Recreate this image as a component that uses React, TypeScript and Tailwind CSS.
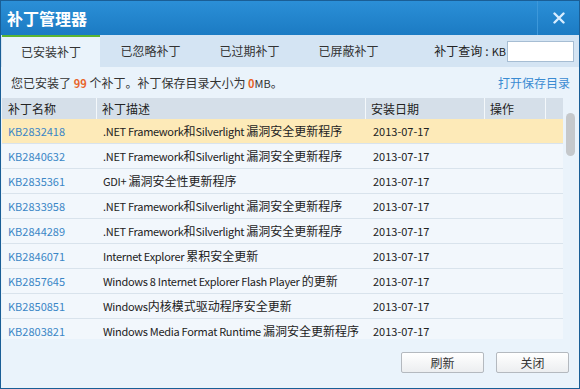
import React from "react";

const rows = [
  ["KB2832418", ".NET Framework和Silverlight 漏洞安全更新程序"],
  ["KB2840632", ".NET Framework和Silverlight 漏洞安全更新程序"],
  ["KB2835361", "GDI+ 漏洞安全性更新程序"],
  ["KB2833958", ".NET Framework和Silverlight 漏洞安全更新程序"],
  ["KB2844289", ".NET Framework和Silverlight 漏洞安全更新程序"],
  ["KB2846071", "Internet Explorer 累积安全更新"],
  ["KB2857645", "Windows 8 Internet Explorer Flash Player 的更新"],
  ["KB2850851", "Windows内核模式驱动程序安全更新"],
  ["KB2803821", "Windows Media Format Runtime 漏洞安全更新程序"],
];

const tabs = ["已安装补丁", "已忽略补丁", "已过期补丁", "已屏蔽补丁"];

const CJK = /[\u4e00-\u9fff\u3000-\u303f\uff00-\uffef]/;

function Mixed({ text }: { text: string }) {
  const parts = text.split(/([\u4e00-\u9fff\u3000-\u303f\uff00-\uffef]+)/).filter((p) => p.length > 0);
  return (
    <span className="whitespace-pre">
      {parts.map((p, i) =>
        CJK.test(p) ? (
          <span key={i} className="text-[12px]">
            {p}
          </span>
        ) : (
          <span key={i} className="text-[11px] tracking-[-0.3px]">
            {p}
          </span>
        )
      )}
    </span>
  );
}

export default function App() {
  return (
    <div
      className="w-[580px] h-[389px] border border-[#1a5e96] bg-[#eaf3fb] flex flex-col overflow-hidden text-[12px] text-[#222]"
      style={{ fontFamily: '"Noto Sans CJK SC", "Noto Sans", sans-serif' }}
    >
      {/* Title bar */}
      <div className="h-[34px] shrink-0 flex items-stretch bg-gradient-to-b from-[#2b8fd7] to-[#1b7bc3]">
        <div className="flex-1 flex items-center pl-[6px] text-white font-bold text-[16px] leading-none">
          补丁管理器
        </div>
        <div className="w-[42px] border-l border-[#3d98da] flex items-center justify-center">
          <svg width="12" height="12" viewBox="0 0 12 12">
            <path d="M1.5 1.5 L10.5 10.5 M10.5 1.5 L1.5 10.5" stroke="#d8edff" strokeWidth="2.4" strokeLinecap="round" />
          </svg>
        </div>
      </div>

      {/* Tabs */}
      <div className="h-[32px] shrink-0 flex items-stretch bg-[#d4e4f3]">
        {tabs.map((t, i) => (
          <div
            key={t}
            className={
              i === 0
                ? "w-[98px] ml-[1px] mr-[1px] flex items-center justify-center bg-[#eaf3fb] border-t-2 border-[#5cb531] text-[#333] leading-none"
                : "w-[99px] flex items-center justify-center text-[#333] leading-none"
            }
          >
            {t}
          </div>
        ))}
        <div className="flex-1 flex items-center justify-end pr-[5px]">
          <span className="text-[#222] leading-none mr-[1px] flex items-center">
            <span>补丁查询</span>
            <span className="mx-[3px]">:</span>
            <span className="text-[11px]">KB</span>
          </span>
          <div className="w-[67px] h-[21px] bg-white border border-[#a6bdd3]" />
        </div>
      </div>

      {/* Info row */}
      <div className="h-[31px] shrink-0 flex items-center justify-between pl-[10px] pr-[9px] leading-none">
        <span className="text-[#333]">
          您已安装了 <span className="text-[#e8642a] font-bold text-[11px]">99</span> 个补丁。补丁保存目录大小为 <span className="text-[#e8642a] font-bold text-[11px]">0</span><span className="text-[11px]">MB</span>。
        </span>
        <span className="text-[#3a8bd2]">打开保存目录</span>
      </div>

      {/* List */}
      <div className="h-[241px] shrink-0 flex">
        <div className="w-[561px] ml-[1px] flex flex-col overflow-hidden">
          <div className="h-[21px] shrink-0 flex bg-[#d5dfe9] leading-none text-[#222]">
            <div className="w-[95px] flex items-center pl-[6px] border-r border-[#f4f8fb]">补丁名称</div>
            <div className="w-[269px] flex items-center pl-[5px] border-r border-[#f4f8fb]">补丁描述</div>
            <div className="w-[119px] flex items-center pl-[5px] border-r border-[#f4f8fb]">安装日期</div>
            <div className="w-[61px] flex items-center pl-[5px] border-r border-[#f4f8fb]">操作</div>
            <div className="flex-1" />
          </div>
          {rows.map(([kb, desc], i) => (
            <div
              key={kb}
              className={
                (i === 0 ? "bg-[#fdeab8] " : "bg-[#f2f7fc] ") +
                "h-[25px] shrink-0 flex border-b border-[#d9e3ec] leading-none"
              }
            >
              <div className="w-[96px] flex items-center pl-[6px] text-[#3a86c6] text-[11px]">{kb}</div>
              <div className="w-[269px] flex items-center pl-[5px] whitespace-nowrap">
                <Mixed text={desc} />
              </div>
              <div className="w-[119px] flex items-center pl-[6px] text-[11px]">2013-07-17</div>
              <div className="flex-1" />
            </div>
          ))}
        </div>
        <div className="w-[14px] flex justify-center">
          <div className="w-[9px] h-[43px] mt-[15px] rounded-full bg-[#c5c8cb]" />
        </div>
      </div>

      {/* Buttons */}
      <div className="flex-1 flex justify-end items-start pt-[13px] pr-[10px] gap-[12px]">
        <button className="w-[83px] h-[21px] border border-[#b4b9bf] rounded-[2px] bg-gradient-to-b from-white to-[#eceef0] text-[#333] leading-none">
          刷新
        </button>
        <button className="w-[73px] h-[21px] border border-[#b4b9bf] rounded-[2px] bg-gradient-to-b from-white to-[#eceef0] text-[#333] leading-none">
          关闭
        </button>
      </div>
    </div>
  );
}
